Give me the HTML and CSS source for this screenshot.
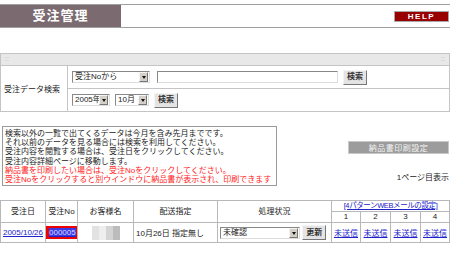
FILE: index.html
```html
<!DOCTYPE html>
<html lang="ja">
<head>
  <meta charset="UTF-8" />
  <title>受注管理</title>
  <link rel="stylesheet" href="styles.css">
</head>
<body>
  <div class="title-bar">
    <div class="title">受注管理</div>
    <div class="title-right">
      <a class="help" href="#help">HELP</a>
    </div>
  </div>

  <div class="search-box">
    <div class="strip"><span>::</span><span>::</span></div>
    <div class="search-body">
      <div class="search-label">受注データ検索</div>
      <div class="search-rows">
        <div class="search-row">
          <span class="sel w-key"><select><option>受注Noから</option></select></span>
          <input type="text" class="keyword" />
          <button class="btn">検索</button>
        </div>
        <div class="search-row">
          <span class="sel w-year"><select><option>2005年</option></select></span>
          <span class="sel w-month"><select><option>10月</option></select></span>
          <button class="btn">検索</button>
        </div>
      </div>
    </div>
  </div>

  <div class="info-row">
    <div class="notice">
      <p>検索以外の一覧で出てくるデータは今月を含み先月までです。</p>
      <p>それ以前のデータを見る場合には検索を利用してください。</p>
      <p>受注内容を閲覧する場合は、受注日をクリックしてください。</p>
      <p>受注内容詳細ページに移動します。</p>
      <p class="red">納品書を印刷したい場合は、受注Noをクリックしてください。</p>
      <p class="red">受注Noをクリックすると別ウインドウに納品書が表示され、印刷できます</p>
    </div>
    <div class="info-side">
      <button class="btn-gray">納品書印刷設定</button>
      <div class="page-no">1ページ目表示</div>
    </div>
  </div>

  <table class="orders">
    <colgroup>
      <col style="width:45px"><col style="width:32px"><col style="width:56px"><col style="width:84px">
      <col style="width:114px"><col style="width:29px"><col style="width:30px"><col style="width:30px"><col style="width:29px">
    </colgroup>
    <tr class="head1">
      <th rowspan="2">受注日</th>
      <th rowspan="2">受注No</th>
      <th rowspan="2">お客様名</th>
      <th rowspan="2">配送指定</th>
      <th rowspan="2">処理状況</th>
      <th colspan="4" class="mail"><a href="#mail">[4パターンWEBメールの設定]</a></th>
    </tr>
    <tr class="head2">
      <th>1</th><th>2</th><th>3</th><th>4</th>
    </tr>
    <tr class="data">
      <td><a href="#detail">2005/10/26</a></td>
      <td><a class="order-no" href="#print"><span>000005</span></a></td>
      <td><span class="blur"><i></i><i></i><i></i><i></i></span></td>
      <td class="left">10月26日 指定無し</td>
      <td class="left">
        <span class="sel w-status"><select><option>未確認</option></select></span>
        <button class="btn">更新</button>
      </td>
      <td><a href="#m1">未送信</a></td>
      <td><a href="#m2">未送信</a></td>
      <td><a href="#m3">未送信</a></td>
      <td><a href="#m4">未送信</a></td>
    </tr>
  </table>
</body>
</html>
```

FILE: styles.css
```css
body {
  margin: 0;
  width: 450px;
  font-family: "Liberation Sans", "Noto Sans CJK JP", sans-serif;
  font-size: 8px;
  color: #222;
  background: white;
}
p {
  margin: 0;
}
a {
  color: #2222cc;
}

/* title bar */
.title-bar {
  display: flex;
  height: 22px;
  margin-top: 4px;
  border-top: 1px solid #a0a0a0;
  border-bottom: 1px solid #a0a0a0;
}
.title {
  width: 121px;
  background: #7b6b70;
  color: white;
  font-weight: bold;
  font-size: 13px;
  letter-spacing: 1px;
  text-align: center;
  line-height: 22px;
}
.title-right {
  flex: 1;
  display: flex;
  justify-content: flex-end;
  align-items: flex-start;
  padding: 6px 1px 0 0;
}
.help {
  display: block;
  width: 53px;
  height: 9px;
  background: #990000;
  border: 1px solid #a8a8a8;
  color: white;
  font-weight: bold;
  font-size: 8px;
  line-height: 9px;
  letter-spacing: 1.5px;
  text-align: center;
  text-decoration: none;
}

/* search box */
.search-box {
  margin-top: 25px;
  border: 1px solid #c4c4c4;
  width: 448px;
}
.strip {
  height: 11px;
  display: flex;
  justify-content: space-between;
  padding: 0 4px;
  color: #b8b8b8;
  font-size: 7px;
  line-height: 10px;
  background-color: #f2f2f2;
  background-image: radial-gradient(#dcdcdc 0.6px, transparent 0.8px);
  background-size: 2px 2px;
  border-bottom: 1px solid #c4c4c4;
}
.search-body {
  display: flex;
}
.search-label {
  width: 63px;
  padding-left: 3px;
  border-right: 1px solid #c4c4c4;
  display: flex;
  align-items: center;
}
.search-rows {
  flex: 1;
}
.search-row {
  height: 22px;
  display: flex;
  align-items: center;
  gap: 5px;
  padding-left: 4px;
}
.search-row + .search-row {
  border-top: 1px solid #c4c4c4;
}

/* form controls */
.sel {
  position: relative;
  display: inline-block;
  height: 12px;
  box-sizing: border-box;
  border: 1px solid #888;
  border-right-color: #ddd;
  border-bottom-color: #ddd;
  background: white;
}
.sel select {
  appearance: none;
  border: none;
  background: transparent;
  font: 8px "Liberation Sans", "Noto Sans CJK JP", sans-serif;
  color: #222;
  padding: 0 0 0 2px;
  height: 10px;
  line-height: 10px;
  width: 100%;
  outline: none;
}
.sel::before {
  content: "";
  position: absolute;
  right: 1px;
  top: 0;
  width: 9px;
  height: 10px;
  background: #d4d0c8;
  border: 1px solid;
  border-color: #f4f4f4 #777 #777 #f4f4f4;
  box-sizing: border-box;
}
.sel::after {
  content: "";
  position: absolute;
  right: 3px;
  top: 4px;
  border-left: 2.5px solid transparent;
  border-right: 2.5px solid transparent;
  border-top: 3px solid #111;
}
.w-key { width: 78px; }
.w-year { width: 38px; }
.w-month { width: 34px; }
.w-status { width: 80px; vertical-align: middle; }
.keyword {
  width: 181px;
  height: 12px;
  box-sizing: border-box;
  border: 1px solid #888;
  border-right-color: #ddd;
  border-bottom-color: #ddd;
  padding: 0;
  margin-left: 2px;
}
.btn {
  height: 15px;
  padding: 0 3px;
  font: bold 8px "Liberation Sans", "Noto Sans CJK JP", sans-serif;
  color: #333;
  background: #e4e4e4;
  border: 1px solid;
  border-color: #f4f4f4 #777 #777 #f4f4f4;
  line-height: 12px;
  vertical-align: middle;
}

/* info */
.info-row {
  display: flex;
  margin-top: 14px;
  padding-left: 2px;
}
.notice {
  width: 269px;
  height: 55px;
  border: 1px solid #9a9a9a;
  padding: 2px 2px 1px 2px;
  line-height: 9.2px;
  white-space: nowrap;
}
.red {
  color: #ff2222;
}
.info-side {
  flex: 1;
  display: flex;
  flex-direction: column;
  align-items: flex-end;
  padding-right: 1px;
}
.btn-gray {
  margin-top: 15px;
  width: 101px;
  height: 13px;
  background: #9c9c9c;
  border: 1px solid #c8c8c8;
  color: #f4f4f4;
  font: 8px "Liberation Sans", "Noto Sans CJK JP", sans-serif;
  letter-spacing: 0.5px;
  padding: 0;
}
.page-no {
  margin-top: 17px;
}

/* order table */
.orders {
  margin-top: 14px;
  border-collapse: collapse;
  table-layout: fixed;
  width: 449px;
}
.orders th,
.orders td {
  border: 1px solid #b8b8b8;
  padding: 0;
  text-align: center;
  font-weight: normal;
  white-space: nowrap;
  overflow: hidden;
}
.head1 th,
.head2 th {
  height: 10px;
  line-height: 10px;
}
.orders th.mail {
  font-size: 7.5px;
  letter-spacing: -0.4px;
  overflow: visible;
}
.data td {
  height: 19px;
}
.orders td.left {
  text-align: left;
  padding-left: 2px;
}
.order-no {
  display: inline-block;
  background: #ee0000;
  padding: 2px 3px;
  line-height: 9px;
}
.order-no span {
  background: #3a3ae8;
  color: #d8d8ff;
}
.blur {
  display: inline-flex;
  vertical-align: middle;
}
.blur i {
  width: 7px;
  height: 14px;
  background: #e2e2e2;
}
.blur i:nth-child(2) { background: #eeeeee; }
.blur i:nth-child(3) { background: #d4d4d4; }
.blur i:nth-child(4) { background: #bcbcbc; }
```
